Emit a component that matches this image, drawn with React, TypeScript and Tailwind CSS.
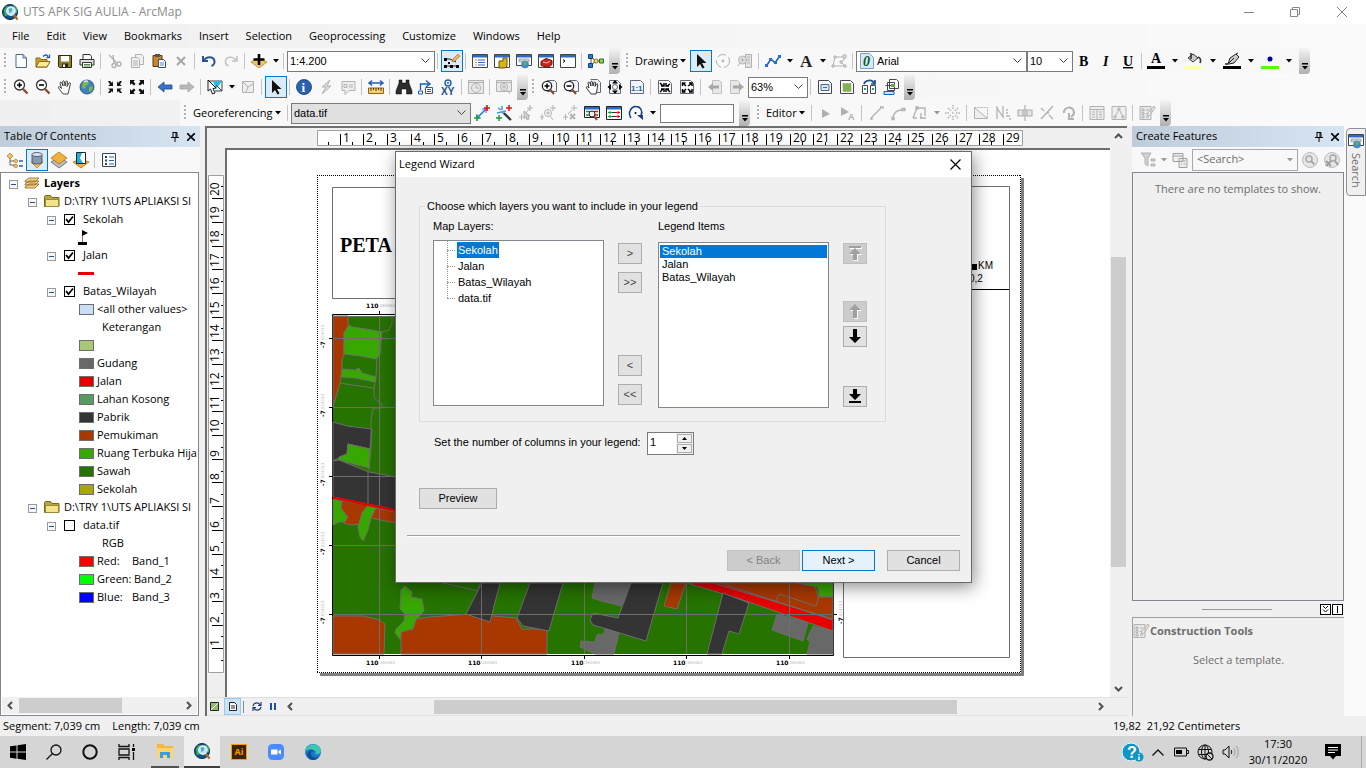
import React, { useState } from 'react';

const G = '#b2b2b2';

// toolbar glyphs, all drawn on a 16x16 grid
const ICONS: Record<string, React.ReactNode> = {
  new: <path d="M3 1.500h7l3.500 3.500v9.500h-10.500z M10 1.500v3.500h3.500" fill="#fff" stroke="#4a6a8a" />,
  open: <><path d="M1 5h4l1 1.500h6v7.500H1z" fill="#c9a227" stroke="#8a6a10" /><path d="M4 8.500h11l-3 5.500H1z" fill="#ffe9a0" stroke="#8a6a10" /><path d="M8 3.500c2-2 4-2 5 0m1.500-2v3h-3" fill="none" stroke="#1c5fa8" strokeWidth="1.300" /></>,
  save: <><path d="M1.500 2.500h13v12h-12l-1-1z" fill="#8c8134" stroke="#2e2a10" /><path d="M4 3h8v5.500H4z" fill="#fff" /><path d="M5 10.500h6v4H5z" fill="#2e2a10" /><path d="M6 11.500h2v2.500H6z" fill="#fff" /></>,
  print: <><path d="M4 7V1.500h7l1.500 2V7" fill="#fff" stroke="#333" /><path d="M1 6.500h14v5.500H1z" fill="#ddd" stroke="#333" /><path d="M3.500 9.500h9v5h-9z" fill="#fff" stroke="#333" /><path d="M5 11.500h6M5 13h6" stroke="#4a8a3a" /></>,
  cut: <g fill="none" stroke={G} strokeWidth="1.400"><path d="M2 2l8 8M6 2l1 8" /><circle cx="12" cy="11" r="2" /><circle cx="7" cy="12.500" r="2" /></g>,
  copy: <g fill="#f0f0f0" stroke={G}><path d="M6.500 1.500h6l2 2v8h-8z" /><path d="M2.500 4.500h6l2 2v8h-8z" /><path d="M4 8h5M4 10h5M4 12h5" /></g>,
  paste: <><path d="M2 2.500h9v11H2z" fill="#c8862a" stroke="#5e3a08" /><path d="M4 1h5v3H4z" fill="#555" /><path d="M7.500 6.500h5l2 2v6h-7z" fill="#fff" stroke="#2b4d80" /><path d="M9 10h4M9 12h4" stroke="#5a8ac8" /></>,
  del: <path d="M4 4l8 8M12 4l-8 8" stroke="#a8a8a8" strokeWidth="2.200" />,
  undo: <path d="M2 3v5h5M2.500 8c3-5 10-5 11 0 .3 2-1 4-3 5" fill="none" stroke="#2a5590" strokeWidth="2" />,
  redo: <path d="M14 3v5H9M13.500 8c-3-5-10-5-11 0-.3 2 1 4 3 5" fill="none" stroke="#c4c4c4" strokeWidth="1.600" />,
  add: <><path d="M0 9l8-4 8 4-8 6z" fill="#f0c66a" stroke="#a87a20" strokeWidth=".7" /><path d="M8 1v11M2.500 6.500h11" stroke="#000" strokeWidth="2.600" /></>,
  editsk: <><path d="M1 6h5l6 3M2 13h10" stroke="#222" fill="none" /><path d="M0 5h3v3H0zM0 12h3v3H0zM6 12h3v3H6zM12 12h3v3h-3zM4 9h2v2H4z" fill="#000" /><path d="M8 9l1-3 5-5 2 2-5 5z" fill="#f0b060" stroke="#a06020" strokeWidth=".6" /></>,
  wlist: <><path d="M.500 1.500h15v13H.500z" fill="#fff" stroke="#444" /><path d="M1 2h14v2.500H1z" fill="#2c6bc4" /><path d="M3 7h2M3 9.500h2M3 12h2" stroke="#d8a020" /><path d="M6 7h7M6 9.500h7M6 12h7" stroke="#2c6bc4" /></>,
  wcat: <><path d="M.500 1.500h15v13H.500z" fill="#fff" stroke="#444" /><path d="M1 2h14v2.500H1z" fill="#2c6bc4" /><path d="M5 8h4V5h4v8l-2 2H5z" fill="#d6b41e" stroke="#6b5608" /></>,
  wglobe: <><path d="M.500 1.500h15v11H.500z" fill="#fff" stroke="#444" /><path d="M1 2h14v2.500H1z" fill="#2c6bc4" /><path d="M3 6h10v3H3z" fill="#ccd" stroke="#889" strokeWidth=".6" /><circle cx="9" cy="11.500" r="3.800" fill="#3d8ad0" /><path d="M7 10l2-2 2 1-1 3-2 1z" fill="#62b347" /></>,
  wbox: <><path d="M.500 1.500h15v13H.500z" fill="#fff" stroke="#444" /><path d="M1 2h14v2.500H1z" fill="#2c6bc4" /><path d="M3 8.500l5-3 6 2v4l-4 3-7-2z" fill="#c8281a" stroke="#701008" /><path d="M5 9l4 1 3-2" stroke="#fff" strokeWidth=".7" fill="none" /></>,
  wpy: <><path d="M.500 1.500h15v13H.500z" fill="#fff" stroke="#444" /><path d="M1 2h14v2.500H1z" fill="#2c6bc4" /><path d="M3 6.500l2 1.500-2 1.500" stroke="#000" fill="none" /></>,
  model: <><path d="M3 4v8M4 4l3 4-3 4M7 8h7" stroke="#555" fill="none" /><path d="M.500 1.500h4v4h-4zM.500 10.500h4v4h-4z" fill="#2c7bd4" stroke="#13406e" /><circle cx="8" cy="8" r="2" fill="#ffe08a" stroke="#8a6a10" /><path d="M11.500 6h4v4h-4z" fill="#8ccf6a" stroke="#2c6a1a" /></>,
  arrow: <path d="M4 1v13l3-3 2.500 4.500 2-1L9 10h4.500z" fill="#111" />,
  rotg: <g stroke={G} fill="none"><circle cx="8" cy="8" r="6.500" strokeDasharray="9 3" /><circle cx="8" cy="8" r="1" fill={G} /></g>,
  zoomg: <g stroke={G} fill="#e2e2e2"><path d="M8.500 1.500h6v13h-6z" /><path d="M10 4h3M10 7h3M10 10h3" /><circle cx="5.500" cy="7" r="4" /><path d="M3.500 7h4M5.500 5v4M3 10l-2 3" /></g>,
  zig: <><path d="M2 12l4-6 4 4 4-6" fill="none" stroke="#1c64b8" strokeWidth="1.600" /><path d="M0 11h3v3H0zM4 5h3v3H4zM9 8h3v3H9zM13 2h3v3h-3z" fill="#2a6fd0" /></>,
  bigA: <text x="2" y="14" fontSize="17" fontWeight="bold" fontFamily="Liberation Serif, serif" fill="#222">A</text>,
  polyg: <g stroke={G} fill="none"><path d="M4 4h9v3l-3 2 4 4H2z" /><path d="M3 3h2v2H3zM12 2h3v3h-3zM1 12h2v2H1zM13 12h2v2h-2zM9 8h2v2H9z" fill="#ddd" /></g>,
  italicO: <><path d="M1.500.500h9l4 4v11h-13z" fill="#d8e8f8" stroke="#7aa4cc" /><text x="4" y="13" fontSize="14" fontStyle="italic" fontWeight="bold" fontFamily="Liberation Serif, serif" fill="#0a5a20">0</text></>,
  bold: <text x="3" y="13" fontSize="14" fontWeight="bold" fontFamily="Liberation Serif, serif">B</text>,
  italic: <text x="5" y="13" fontSize="14" fontStyle="italic" fontWeight="bold" fontFamily="Liberation Serif, serif">I</text>,
  under: <text x="3" y="13" fontSize="14" fontWeight="bold" textDecoration="underline" fontFamily="Liberation Serif, serif">U</text>,
  fontc: <><text x="3" y="10" fontSize="14" fontWeight="bold" fontFamily="Liberation Serif, serif">A</text><path d="M-1 13h18v3H-1z" /></>,
  fillc: <><path d="M2 5l5-4 5 4-5 4z" fill="#ccc" stroke="#333" /><path d="M5 6V0M12 4c3 1 3 4 2 6" stroke="#333" fill="none" strokeWidth="1.600" /><path d="M-1 13h18v3H-1z" fill="#ffffb0" /></>,
  linec: <><path d="M1 11h3l2-6 6-4 3 3-5 6-5 1zM5 10l5-5M12 1l2-1" stroke="#222" fill="#ccc" /><path d="M-1 13h18v3H-1z" /></>,
  markc: <><circle cx="8" cy="6" r="2.500" fill="#00009c" /><path d="M-1 13h18v3H-1z" fill="#5f0" /></>,
  zin: <><circle cx="6.500" cy="6" r="5" fill="#fff" stroke="#333" strokeWidth="1.300" /><path d="M4 6h5M6.500 3.500v5" stroke="#000" strokeWidth="1.600" /><path d="M10 10l4.500 4.500" stroke="#8a4a30" strokeWidth="2.400" /></>,
  zout: <><circle cx="6.500" cy="6" r="5" fill="#fff" stroke="#333" strokeWidth="1.300" /><path d="M4 6h5" stroke="#000" strokeWidth="1.600" /><path d="M10 10l4.500 4.500" stroke="#8a4a30" strokeWidth="2.400" /></>,
  hand: <path d="M6 15L1.500 9c-.5-1 .5-2 1.500-1l1.500 1.500L3 4c0-1 1.300-1.300 1.700-.3L6 7 5.700 2.500c0-1 1.500-1 1.700 0L8 7l1-4.500c.3-1 1.500-.8 1.500.2L10 7.500 12 4c.6-.8 1.700-.2 1.400.7L12 11l-1 4z" fill="#fff" stroke="#333" strokeWidth=".9" />,
  globe: <><circle cx="8" cy="8" r="7" fill="#3f7fc4" stroke="#23466e" strokeWidth=".8" /><path d="M4 3l5-1 1 3-3 2-1 3-3-1zM10 8l4-1-1 5-3 1z" fill="#7ab648" /><path d="M5 3c1-1 3-1 4-.5" stroke="#d8ecff" strokeWidth="1.500" fill="none" /></>,
  fin: <path d="M1 2h2l2 2 1-2v5H1l2-1.500zM15 2h-2l-2 2-1-2v5h5l-2-1.500zM1 14h2l2-2 1 2V9.500H1L3 11zM15 14h-2l-2-2-1 2V9.500h5L13 11z" fill="#111" />,
  fout: <path d="M1 1h5L4.500 2.500 6.500 5 5 6.500 2.500 4.500 1 6zM15 1h-5l1.500 1.500L9.500 5 11 6.500l2.500-2L15 6zM1 15h5l-1.500-1.500 2-2.500L5 9.500l-2.500 2L1 10zM15 15h-5l1.500-1.500-2-2.500L11 9.500l2.500 2L15 10z" fill="#111" />,
  back: <path d="M1 8l6-5v3h8v4H7v3z" fill="#3873c8" stroke="#1f4a90" strokeWidth=".8" />,
  fwd: <path d="M15 8L9 3v3H1v4h8v3z" fill="#b8b8b8" stroke="#a4a4a4" strokeWidth=".8" />,
  selF: <><path d="M1 2h14v10H8" fill="#e8f4fb" stroke="#444" /><path d="M6 2h9l-6 8z" fill="#2ab8e0" /><path d="M9 6l6 6" stroke="#444" /><path d="M1 1v11l2.500-2 2 5 2.500-1-2-4.500 3-.5z" fill="#fff" stroke="#000" strokeWidth=".9" /></>,
  clrg: <path d="M2.500 2.500h11v11h-11zM3 3l5 5-2 5M8 8l5-3" fill="#eee" stroke={G} />,
  info: <><circle cx="8" cy="8" r="7.500" fill="#2a62b0" stroke="#15366a" strokeWidth=".8" /><text x="5.500" y="13" fontSize="13" fontWeight="bold" fontFamily="Liberation Serif, serif" fill="#fff">i</text></>,
  boltg: <path d="M12 1L4 8h4l-4 7 9-8H9z" fill="#ddd" stroke={G} />,
  popg: <g stroke={G} fill="#eee"><path d="M2 2.500h13v9H9l-4 4v-4H2z" /><path d="M4 5.500h3v3H4zM9 6h4M9 8h4" /></g>,
  meas: <><path d="M1 4h14M4 1.500L1 4l3 2.500M12 1.500L15 4l-3 2.500" stroke="#1c5fb0" strokeWidth="1.500" fill="none" /><path d="M.500 9h15v5.500H.500z" fill="#f5cf72" stroke="#8a6414" /><path d="M3 9v3M5.500 9v2M8 9v3M10.500 9v2M13 9v3" stroke="#5a4008" /></>,
  bino: <path d="M3 1h3v3h4V1h3v3l3 8v3h-5.500v-5h-5v5H0v-3l3-8z" fill="#2e2e2e" stroke="#000" strokeWidth=".5" />,
  route: <><path d="M2.500 11V5h8M8 1.500L12 5 8 8" stroke="#1c5fb0" fill="none" strokeWidth="1.400" /><path d="M7.500 8.500h7v6h-7z" fill="#fff" stroke="#1c5fb0" /><path d="M9 10.500h4M9 12.500h4M.500 12h4v3h-4z" stroke="#1c5fb0" fill="none" /></>,
  xy: <><circle cx="8" cy="4" r="3" fill="none" stroke="#1c5fb0" strokeWidth="1.400" /><circle cx="8" cy="4" r="1" fill="#1c5fb0" /><text x="1" y="16" fontSize="10" fontWeight="bold" fontFamily="Liberation Sans, sans-serif" fill="#1c4f90">XY</text></>,
  clockg: <g stroke={G} fill="#e8e8e8"><path d="M.500 1.500h15v13H.500z" /><path d="M1 3.500h14" /><circle cx="8" cy="9" r="4.500" /><path d="M8 6v3h3" /></g>,
  viewg: <g stroke={G} fill="#e8e8e8"><path d="M.500 1.500h15v11H.500z" /><path d="M1 3.500h14" /><circle cx="8" cy="8" r="3.500" /><path d="M6 8h4M8 6v4M11 11l3 4" /></g>,
  pin: <><path d="M6.500 1.500h7l2 2v9h-9z" fill="#eef4fa" stroke="#667" /><circle cx="6" cy="7" r="4.700" fill="#fff" stroke="#222" strokeWidth="1.300" /><path d="M3.500 7h5M6 4.500v5" stroke="#000" strokeWidth="1.500" /><path d="M9.500 11l3.500 4" stroke="#8a4a30" strokeWidth="2" /></>,
  pout: <><path d="M6.500 1.500h7l2 2v9h-9z" fill="#eef4fa" stroke="#667" /><circle cx="6" cy="7" r="4.700" fill="#fff" stroke="#222" strokeWidth="1.300" /><path d="M3.500 7h5" stroke="#000" strokeWidth="1.500" /><path d="M9.500 11l3.500 4" stroke="#8a4a30" strokeWidth="2" /></>,
  phand: <><path d="M5.500.500h7l3 3v10h-4" fill="#eef4fa" stroke="#667" /><path d="M6 15L1.500 9c-.5-1 .5-2 1.500-1l1 1L3 4c0-1 1.300-1.300 1.700-.3L6 7 5.700 3c0-1 1.500-1 1.700 0L8 7l1-3.500c.3-1 1.500-.8 1.500.2L10 7.500 11.500 5c.6-.8 1.500-.2 1.200.7L12 11l-1 4z" fill="#fff" stroke="#222" strokeWidth=".9" /></>,
  pfull: <><path d="M2.500 1.500h8l3 3v10h-11z" fill="#eef4fa" stroke="#667" /><path d="M8 1l3 3.500H5zM8 15l3-3.500H5zM.500 8L4 5v6zM15.500 8L12 5v6z" fill="#000" /><circle cx="8" cy="8" r="2.500" fill="#fff" stroke="#666" /></>,
  p11: <><path d="M1.500 1.500h10l3 3v10h-13z" fill="#eef4fa" stroke="#667" /><text x="2" y="11.500" fontSize="8" fontWeight="bold" fontFamily="Liberation Sans, sans-serif" fill="#1c64a8">1:1</text></>,
  pfin: <><path d="M1.500 1.500h10l3 3v10h-13z" fill="#fff" stroke="#667" /><path d="M3 4l3 3M13 5l-3 2M3 13l3-3M13 13l-3-3M4 7h3V4M9 4v3h3M4 10h3v3M9 13v-3h3" stroke="#000" strokeWidth="1.500" fill="none" /></>,
  pfout: <><path d="M1.500 1.500h10l3 3v10h-13z" fill="#fff" stroke="#667" /><path d="M4 4l3 3M12 5l-3 2M4 13l3-3M12 13l-3-3M3.500 7V4h3M10 4h3v3M3.500 10v3h3M10 13h3v-3" stroke="#000" strokeWidth="1.500" fill="none" /></>,
  pbackg: <><path d="M5.500 1.500h7l2 2v11h-9z" fill="#e8e8e8" stroke="#c0c0c0" /><path d="M1 8l5-4v2.500h6v3H6V12z" fill="#a8a8a8" /></>,
  pfwdg: <><path d="M1.500 1.500h7l2 2v11h-9z" fill="#e8e8e8" stroke="#c0c0c0" /><path d="M15 8l-5-4v2.500H4v3h6V12z" fill="#a8a8a8" /></>,
  dlay: <><path d="M1.500 1.500h10l3 3v10h-13z" fill="#fff" stroke="#445" /><path d="M4 5.500h8v6H4z" fill="#dce8f4" stroke="#456a94" /><path d="M6 8.500h4" stroke="#456a94" /></>,
  dfoc: <><path d="M1.500 1.500h10l3 3v10h-13z" fill="#fff" stroke="#445" /><path d="M4 4.500h8v8H4z" fill="#78b45a" stroke="#c0a040" strokeDasharray="2 1" /></>,
  dchg: <><path d="M1.500 6.500h5v8h-5zM9.500 6.500h5v8h-5z" fill="#fff" stroke="#445" /><path d="M3 10h2M11 10h2" stroke="#2a6" strokeWidth="2" /><path d="M3 5c1-4 8-5 10-1m1-3v4h-4" fill="none" stroke="#1c4f90" strokeWidth="1.700" /></>,
  dpag: <><path d="M6.500.500h7l2 2v7h-9zM4.500 3.500h7v8h-7zM2.500 6.500h7" fill="#fff" stroke="#445" /><path d="M8 5h4v3H8z" fill="#6aa84f" /><path d="M1 12.500h10v3H1z" fill="#cfe0f4" stroke="#1c5fb0" /></>,
  gadd: <><path d="M3 13l9-9" stroke="#1c7fd0" strokeWidth="1.600" /><path d="M8 4h4v4M3 9v4h4" stroke="#1c7fd0" fill="none" /><path d="M0 13h6M3 10v6" stroke="#1aa030" strokeWidth="1.600" /><path d="M10 3h6M13 0v6" stroke="#e01010" strokeWidth="1.600" /></>,
  gauto: <><path d="M2 3l3 2M6 1v4M10 6L1 8M6 7l8 8" stroke="#3a9ad8" strokeWidth="1.500" /><path d="M8 8l7 7" stroke="#333" strokeWidth="2" /><path d="M0 13h6M3 10v6" stroke="#1aa030" strokeWidth="1.500" /><path d="M10 3h6M13 0v6" stroke="#e01010" strokeWidth="1.500" /></>,
  gselg: <g stroke={G} fill="none"><path d="M1 12h5M3.500 9v6M9 3h6M12 0v6M8 8l3-4" /><path d="M6 6v8l2-2 1 3 2-1-1-2 2-1z" fill="#ccc" /></g>,
  gzoomg: <g stroke={G} fill="none"><path d="M0 12h4M2 9v6M10 3h6M13 0v6" /><circle cx="8" cy="8" r="3.500" /><path d="M6 8h4M8 6v4M10 11l3 4" /></g>,
  gdelg: <g stroke={G} fill="none"><path d="M1 12h5M3.500 9v6M9 3h6M12 0v6M6 9l4-4" /><path d="M8 9l5 5M13 9l-5 5" strokeWidth="2" /></g>,
  gview: <><path d="M.500 1.500h15v11H.500z" fill="#fff" stroke="#222" /><path d="M1 2h14v2.500H1z" fill="#2c6bc4" /><path d="M2 6.500h4M2 10h4" stroke="#1aa030" strokeWidth="1.500" /><path d="M10 6.500h4M10 10h4" stroke="#e01010" strokeWidth="1.500" /><circle cx="8" cy="9" r="3" fill="#eee" stroke="#222" /><path d="M10 11l3 4" stroke="#8a4a30" strokeWidth="2" /></>,
  gtab: <><path d="M.500 1.500h15v13H.500z" fill="#fff" stroke="#222" /><path d="M1 2h14v2.500H1z" fill="#2c6bc4" /><path d="M2 7.500h4M2 11.500h4M4 6v3M4 10v3" stroke="#1aa030" /><path d="M10 7.500h4M10 11.500h4M12 6v3M12 10v3" stroke="#e01010" /><path d="M6 7.500h4M6 11.500h4" stroke="#333" /></>,
  grot: <><path d="M3 13C-1 7 4 1 8 1.500c5 0 7 5 5 9" stroke="#1c3f80" strokeWidth="1.500" fill="none" /><path d="M9 10h6v5z" fill="#1c3f80" /><circle cx="7.500" cy="8" r="1" /></>,
  edg: <path d="M4 4l8 5-8 4z" fill="#b0b0b0" />,
  edag: <><path d="M1 2l8 5-8 4z" fill="#b0b0b0" /><text x="8" y="15" fontSize="9" fontWeight="bold" fontFamily="Liberation Sans, sans-serif" fill="#b0b0b0">A</text></>,
  lng: <path d="M3 13L13 3M2 14h2v-2M12 2h3v2" stroke={G} fill="none" strokeWidth="1.400" />,
  arcg: <path d="M3 13c0-5 4-8 9-8M2 12.500h2v2H2zM12 3.500h3v2h-3z" stroke={G} fill="none" strokeWidth="1.400" />,
  trg: <path d="M1 13L5 3h8v8M1 13h4M8 13h6M9 8v6M4 2h2v2H4z" stroke={G} fill="none" strokeWidth="1.300" />,
  ptg: <path d="M8 0v5M8 11v5M0 8h5M11 8h5M3 3l3 3M13 3l-3 3M3 13l3-3M13 13l-3-3M7 8h2" stroke={G} strokeDasharray="1.500 1" strokeWidth="1.500" />,
  e1g: <><path d="M1.500 2.500h13v11h-13z" stroke={G} fill="none" strokeDasharray="2 1" /><path d="M1.500 13.500v-11l13 11z" stroke={G} fill="#eee" /></>,
  e2g: <path d="M2 1v13M2 3l6 9V1M11 5h2M11 8h2M11 11h4M14 14h2" stroke={G} fill="none" strokeWidth="1.300" />,
  e3g: <path d="M1 5h14v6H1zM8 0v16M6 5h4v6H6z" stroke={G} fill="#e4e4e4" strokeWidth="1.200" />,
  e4g: <path d="M14 1L2 14M2 3l3 3M10 10l4 4M7 8h3" stroke={G} strokeWidth="1.400" />,
  e5g: <path d="M3 8c-1-6 9-8 10-1 0 3-1 4-3 5M8 8v6h5" stroke={G} strokeWidth="2" fill="none" />,
  tbg: <path d="M1 1.500h14v13H1zM1 4.500h14M8 4v10M3 7h3M3 9.500h3M3 12h3M10 7h3M10 9.500h3M10 12h3" stroke={G} fill="#eee" />,
  skg: <path d="M1 1.500h14v13H1zM4 12l4-8 4 8M3 11h2v2H3zM7 3h2v2H7zM11 11h2v2h-2z" stroke={G} fill="#eee" />,
  tmg: <path d="M1 1.500h11v13H1zM3 4h2v2H3zM3 7.500h2v2H3zM3 11h2v2H3zM7 5h3M7 8.500h2M7 12h3M15 1l-6 7-1 3 3-1 5-7z" stroke={G} fill="#e8e8e8" />,
  tree: <><path d="M3 6v7h6M3 9h4" stroke="#667" fill="none" /><path d="M0 4l3-3 3 3-3 3zM6 9l3-2 2 2-2 2zM6 14l3-2 2 2-2 2z" fill="#f0c060" stroke="#a87820" strokeWidth=".7" /><path d="M12 9h4M12 14h4" stroke="#1c64b8" strokeWidth="1.500" /></>,
  db: <><path d="M2 10h12l-6 6z" fill="#f0c060" stroke="#a87820" strokeWidth=".7" /><path d="M3 2.500v8c2 2 8 2 10 0v-8z" fill="#8798b0" stroke="#3a4456" strokeWidth=".8" /><ellipse cx="8" cy="2.500" rx="5" ry="2" fill="#dde6f0" stroke="#3a4456" strokeWidth=".8" /></>,
  vis: <><path d="M0 10l8-5 8 5-8 6z" fill="#bbb" stroke="#666" strokeWidth=".8" /><path d="M0 6l8-6 8 6-8 6z" fill="#f0b040" stroke="#a87820" strokeWidth=".8" /></>,
  selL: <><path d="M0 10l8-3 8 3-8 6z" fill="#f0b040" stroke="#a87820" strokeWidth=".8" /><path d="M3.500.500h9v11h-9z" fill="#fff" stroke="#222" /><path d="M4 1h5l-2 5 3 5H4z" fill="#1ab0e0" /></>,
  opts: <><path d="M1.500 1.500h13v13h-13z" fill="#fff" stroke="#345" /><path d="M4 4h2v2H4zM4 7.500h2v2H4zM4 11h2v2H4z" fill="#345" /><path d="M8 5h5M8 8.500h5M8 12h5" stroke="#1c64b8" /></>,
  filg: <path d="M1 1h10L8 6v8l-3-2V6zM11 7h4v2h-4zM11 12h4v2h-4z" fill="#d0d0d0" stroke={G} />,
  orgg: <path d="M1 1.500h10v8H1zM1 4h10M7 6.500h8v9H7zM9 9h1M9 12h1M11.500 9h2M11.500 12h2" fill="#eee" stroke="#a0a0a0" />,
  srchg: <><circle cx="8" cy="8" r="7.500" fill="#e6e6e6" stroke="#bbb" /><circle cx="7" cy="7" r="3" fill="none" stroke="#a8a8a8" strokeWidth="1.500" /><path d="M9 9l3.500 3.500" stroke="#a8a8a8" strokeWidth="2" /></>,
  srcxg: <><circle cx="8" cy="8" r="7.500" fill="#e6e6e6" stroke="#bbb" /><circle cx="9" cy="6" r="3" fill="none" stroke="#a8a8a8" strokeWidth="1.500" /><path d="M11 9l3 4M2 9l5 5M7 9l-5 5" stroke="#999" strokeWidth="1.800" /></>,
};

const Icon = ({ name }: { name: string }) => (
  <svg viewBox="0 0 16 16" className="size-4 shrink-0 overflow-visible" aria-hidden="true">{ICONS[name]}</svg>
);

const Caret = ({ w = 'w-[11px]', grey = false }: { w?: string; grey?: boolean }) => (
  <span className={`flex ${w} shrink-0 justify-center`}>
    <svg viewBox="0 0 6 4" className="h-1 w-1.5"><path d="M0 0h6L3 3.500z" fill={grey ? '#999' : '#000'} /></svg>
  </span>
);

const Grip = () => (
  <span className="flex w-[10px] shrink-0 justify-center">
    <svg viewBox="0 0 2 16" className="h-4 w-0.5"><path d="M1 0v16" stroke="#b0b0b0" strokeWidth="2" strokeDasharray="2 2" /></svg>
  </span>
);

const Sep = () => <span className="mr-[3px] ml-0.5 h-4 w-px shrink-0 bg-[#c4c4c4]" />;

const Overflow = () => (
  <button aria-label="Toolbar options" className="ml-0.5 flex h-[26px] w-[11px] shrink-0 items-end justify-center rounded-r bg-gradient-to-b from-[#f4f4f4] to-[#b0b0b0] pb-1">
    <svg viewBox="0 0 6 7" className="h-[7px] w-1.5"><path d="M0 0h6v1.500H0zM0 3h6L3 6.500z" /></svg>
  </button>
);

// '|' is a separator, 'v' a drop arrow, 'V' a wide one, 'x' a greyed one, '*' marks the pressed tool
const Tools = ({ items }: { items: string }) => (
  <>
    {items.split(' ').map((it, i) => {
      if (it === '|') return <Sep key={i} />;
      if (it === 'v') return <Caret key={i} />;
      if (it === 'V') return <Caret key={i} w="w-4" />;
      if (it === 'x') return <Caret key={i} grey />;
      const on = it.startsWith('*');
      const name = on ? it.slice(1) : it;
      return (
        <button key={i} aria-label={name} className={`flex size-[22px] shrink-0 items-center justify-center ${on ? 'border border-[#0078d7] bg-[#dcebf8]' : ''}`}>
          <Icon name={name} />
        </button>
      );
    })}
  </>
);

const Combo = ({ label, value, w, dim = false, icon }: { label: string; value: string; w: string; dim?: boolean; icon?: string }) => (
  <label className={`relative flex h-[21px] ${w} shrink-0 items-center border border-[#7a7a7a] ${dim ? 'bg-[#e1e1e1]' : 'bg-white'}`}>
    {icon && <span className="pl-0.5"><Icon name={icon} /></span>}
    <select aria-label={label} className="h-full w-full appearance-none bg-transparent px-0.5 font-[Liberation_Sans,sans-serif] text-[11px] outline-none">
      <option>{value}</option>
    </select>
    <svg viewBox="0 0 9 6" className="pointer-events-none absolute right-1 h-1.5 w-[9px]"><path d="M.500.500l4 4 4-4" fill="none" stroke="#444" /></svg>
  </label>
);

const STRIP = 'flex h-[26px] items-center bg-[#f8f8f8]';

const Toolbars = () => (
  <div className="flex shrink-0 flex-col overflow-hidden bg-gradient-to-r from-[#f0f0f0] to-[#fafafa]">
    <div className="flex gap-0.5">
      <div className={STRIP}>
        <Grip />
        <Tools items="new open save print | cut copy paste del | undo redo | add v |" />
        <Combo label="Map scale" value="1:4.200" w="w-[148px]" />
        <Sep />
        <Tools items="*editsk | wlist wcat wglobe wbox wpy | model" />
        <Overflow />
      </div>
      <div className={STRIP}>
        <Grip />
        <button className="flex w-[58px] items-center pl-[3px]">Drawing<Caret /></button>
        <Tools items="*arrow rotg zoomg | zig v bigA v polyg |" />
        <Combo label="Font" value="Arial" w="w-[171px]" icon="italicO" />
        <Combo label="Font size" value="10" w="w-[46px]" />
        <Tools items="bold italic under | fontc V fillc V linec V markc V" />
        <Overflow />
      </div>
    </div>
    <div className="flex">
      <div className={STRIP}>
        <Grip />
        <Tools items="zin zout hand globe | fin fout | back fwd | selF v clrg | *arrow | info boltg popg | meas | bino route xy | clockg | viewg" />
        <Overflow />
      </div>
      <div className={STRIP}>
        <Grip />
        <Tools items="pin pout phand pfull p11 | pfin pfout | pbackg pfwdg" />
        <Combo label="Zoom" value="63%" w="w-[60px]" />
        <Sep />
        <Tools items="dlay dfoc dchg dpag" />
        <Overflow />
      </div>
    </div>
    <div className="flex gap-[3px] pl-[180px]">
      <div className={STRIP}>
        <Grip />
        <button className="flex w-[95px] items-center pl-[3px]">Georeferencing<Caret /></button>
        <Sep />
        <Combo label="Raster layer" value="data.tif" w="w-[180px]" dim />
        <Tools items="gadd gauto gselg gzoomg gdelg gview gtab grot v" />
        <input aria-label="Rotation" className="mr-[3px] ml-0.5 h-[19px] w-[74px] border border-[#7a7a7a] bg-white px-1" />
        <Overflow />
      </div>
      <div className={STRIP}>
        <Grip />
        <button className="flex w-[46px] items-center pl-[3px]">Editor<Caret /></button>
        <Sep />
        <Tools items="edg edag | lng arcg trg x ptg | e1g e2g e3g e4g e5g | tbg skg | tmg" />
        <Overflow />
      </div>
    </div>
  </div>
);

const GlobeLogo = ({ cls }: { cls: string }) => (
  <svg viewBox="0 0 18 18" className={cls}>
    <circle cx="8.500" cy="8.500" r="8" fill="#14557f" stroke="#0a2c48" />
    <path d="M2 6l3-4 3 1-3 4 1 5-3 1zM12 1l4 4v5l-3-2z" fill="#3fae6a" />
    <circle cx="9.500" cy="7.500" r="4.500" fill="#bfe6f5" stroke="#e8f4fa" strokeWidth="1.200" />
    <path d="M7 5l3-1 1 3-3 3z" fill="#55a5c8" />
    <path d="M12.500 11.500l4 5" stroke="#b5651d" strokeWidth="2.400" />
  </svg>
);

const TitleBar = () => (
  <header className="flex h-6 shrink-0 items-center bg-white pl-0.5 text-[#8a8a8a]">
    <GlobeLogo cls="size-[17px]" />
    <h1 className="ml-1 text-[12px]">UTS APK SIG AULIA - ArcMap</h1>
    <div className="ml-auto flex">
      <button aria-label="Minimize" className="flex w-[46px] justify-center"><svg viewBox="0 0 10 10" className="size-2.5"><path d="M0 5.500h10" stroke="#888" /></svg></button>
      <button aria-label="Restore" className="flex w-[46px] justify-center"><svg viewBox="0 0 10 10" className="size-2.5"><path d="M.500 2.500h7v7h-7zM2.500 2.500v-2h7v7h-2" fill="none" stroke="#888" /></svg></button>
      <button aria-label="Close" className="flex w-12 justify-center"><svg viewBox="0 0 10 10" className="size-2.5"><path d="M0 0l10 10M10 0L0 10" stroke="#888" /></svg></button>
    </div>
  </header>
);

const MENU = ['File', 'Edit', 'View', 'Bookmarks', 'Insert', 'Selection', 'Geoprocessing', 'Customize', 'Windows', 'Help'];

const PaneHeader = ({ title }: { title: string }) => (
  <div className="flex h-[21px] shrink-0 items-center bg-gradient-to-r from-[#bfcddb] to-[#d7e4f2] pl-1">
    <h2>{title}</h2>
    <button aria-label="Pin" className="ml-auto"><svg viewBox="0 0 8 10" className="h-2.5 w-2"><path d="M2 .500h4v5M5 .500v5M2 0v5.500M0 5.500h8M4 6v4" fill="none" stroke="#000" /></svg></button>
    <button aria-label="Close" className="mr-[5px] ml-2"><svg viewBox="0 0 8 8" className="size-2"><path d="M0 0l8 8M8 0L0 8" stroke="#000" strokeWidth="1.600" /></svg></button>
  </div>
);

const Expander = () => (
  <button aria-label="Collapse" className="mt-0.5 flex size-[9px] shrink-0 items-center justify-center border border-[#9a9a9a] bg-[#f6f6f6]"><span className="h-px w-[5px] bg-[#2a4f9a]" /></button>
);

const Folder = () => (
  <svg viewBox="0 0 16 14" className="mr-1 h-3.5 w-4 shrink-0"><path d="M.500 12.500v-10l1-1h5l1.500 2h7v9z" fill="#b9a444" stroke="#77681c" /><path d="M1.500 5.500h13v7h-13z" fill="#f2e48c" stroke="#9c8a2c" /></svg>
);

const LayerCheck = ({ label, on }: { label: string; on: boolean }) => {
  const [checked, setChecked] = useState(on);
  return (
    <label className="flex items-center">
      <span className="relative mr-2 ml-2 flex size-[11px]">
        <input type="checkbox" checked={checked} onChange={() => setChecked(!checked)} className="size-[11px] appearance-none border border-black bg-white" />
        {checked && <svg viewBox="0 0 11 11" className="pointer-events-none absolute inset-0 size-[11px]"><path d="M2 5l2.500 3L9 2.500" fill="none" stroke="#000" strokeWidth="1.800" /></svg>}
      </span>
      {label}
    </label>
  );
};

const Row = ({ pad, children }: { pad: string; children: React.ReactNode }) => (
  <li className={`flex h-[18px] items-center whitespace-nowrap ${pad}`}>{children}</li>
);

const Swatch = ({ color }: { color: string }) => <span className={`mr-[3px] h-[11px] w-[15px] shrink-0 border border-[#6e6e6e] ${color}`} />;

const CLASSES = [
  ['bg-[#686868]', 'Gudang'], ['bg-[#e60000]', 'Jalan'], ['bg-[#589b61]', 'Lahan Kosong'], ['bg-[#343434]', 'Pabrik'],
  ['bg-[#a83800]', 'Pemukiman'], ['bg-[#38a800]', 'Ruang Terbuka Hija'], ['bg-[#267300]', 'Sawah'], ['bg-[#a8a800]', 'Sekolah'],
];

const Chev = ({ d }: { d: 'l' | 'r' | 'u' | 'd' }) => {
  const path = { l: 'M6 1L2.500 4.500 6 8', r: 'M3 1l3.500 3.500L3 8', u: 'M1 6l3.500-3.500L8 6', d: 'M1 3l3.500 3.500L8 3' }[d];
  return <svg viewBox="0 0 9 9" className="size-[9px]"><path d={path} fill="none" stroke="#505050" strokeWidth="2" /></svg>;
};

const Contents = () => (
  <aside className="flex w-[200px] shrink-0 flex-col">
    <PaneHeader title="Table Of Contents" />
    <div className="flex h-[25px] items-center bg-[#f8f8f8] pl-1">
      <Tools items="tree *db vis selL | opts" />
    </div>
    <div className="flex min-h-0 w-[199px] flex-1 flex-col border border-[#828790] bg-white p-px">
      <ul className="min-h-0 flex-1 overflow-hidden">
        <Row pad="pl-[7px]">
          <Expander />
          <svg viewBox="0 0 16 14" className="mr-1 ml-1.5 h-3.5 w-4"><path d="M1 11l4-3h10l-4 4H1zM1 8l4-3h10l-4 4H1zM1 5l4-3h10l-4 4H1z" fill="#f3d08a" stroke="#8a6420" strokeWidth=".8" /></svg>
          <b>Layers</b>
        </Row>
        <Row pad="pl-[26px]"><Expander /><span className="w-[7px] shrink-0" /><Folder />D:\TRY 1\UTS APLIAKSI SI</Row>
        <Row pad="pl-[45px]"><Expander /><LayerCheck label="Sekolah" on /></Row>
        <Row pad="pl-[75px]"><svg viewBox="0 0 12 16" className="h-4 w-3"><path d="M5.500 2v11" stroke="#b06060" /><path d="M5 1l6 3-6 3z" /><path d="M1 13h9v3H1z" /></svg></Row>
        <Row pad="pl-[45px]"><Expander /><LayerCheck label="Jalan" on /></Row>
        <Row pad="pl-[76px]"><span className="h-[3px] w-4 bg-[#e60000]" /></Row>
        <Row pad="pl-[45px]"><Expander /><LayerCheck label="Batas_Wilayah" on /></Row>
        <Row pad="pl-[77px]"><Swatch color="bg-[#ccdef5]" />&lt;all other values&gt;</Row>
        <Row pad="pl-[100px]">Keterangan</Row>
        <Row pad="pl-[77px]"><Swatch color="bg-[#a8c878]" /></Row>
        {CLASSES.map(([color, name]) => <Row key={name} pad="pl-[77px]"><Swatch color={color} />{name}</Row>)}
        <Row pad="pl-[26px]"><Expander /><span className="w-[7px] shrink-0" /><Folder />D:\TRY 1\UTS APLIAKSI SI</Row>
        <Row pad="pl-[45px]"><Expander /><LayerCheck label="data.tif" on={false} /></Row>
        <Row pad="pl-[100px]">RGB</Row>
        <Row pad="pl-[77px]"><Swatch color="bg-[#f00]" /><span className="w-[35px]">Red:</span>Band_1</Row>
        <Row pad="pl-[77px]"><Swatch color="bg-[#0f0]" /><span className="w-[37px]">Green:</span>Band_2</Row>
        <Row pad="pl-[77px]"><Swatch color="bg-[#00f]" /><span className="w-[35px]">Blue:</span>Band_3</Row>
      </ul>
      <div className="flex h-[17px] items-center bg-[#f0f0f0]">
        <span className="flex w-[17px] justify-center"><Chev d="l" /></span>
        <span className="h-[15px] w-[103px] bg-[#cdcdcd]" />
        <span className="ml-auto flex w-[17px] justify-center"><Chev d="r" /></span>
      </div>
    </div>
  </aside>
);

const CM = 23.69;
const cms = (n: number) => Array.from({ length: n }, (_, i) => i + 1);

const RulerH = () => (
  <svg viewBox="0 0 706 16" className="h-4 w-[706px] shrink-0 overflow-visible" fontFamily="Open Sans, sans-serif" fontSize="12">
    <path d="M.500.500h705v15H.500z" fill="#fff" stroke="#a0a0a0" />
    {cms(29).map(n => (
      <g key={n}>
        <path d={`M${Math.round(n * CM - 1) + 0.5} 4v11M${Math.round((n - 0.5) * CM - 1) + 0.5} 12v3`} stroke="#000" />
        <text x={Math.round(n * CM) + 2} y="12">{n}</text>
      </g>
    ))}
  </svg>
);

const RulerV = () => (
  <svg viewBox="0 0 16 498" className="h-[498px] w-4 shrink-0 overflow-visible" fontFamily="Open Sans, sans-serif" fontSize="12">
    <path d="M.500.500h15v497H.500z" fill="#fff" stroke="#a0a0a0" />
    {cms(20).map(n => (
      <g key={n}>
        <path d={`M4 ${Math.round(497 - n * CM) + 0.5}h11M13 ${Math.round(497 - (n - 0.5) * CM) + 0.5}h2M13 ${Math.round(497 - 20.5 * CM) + 0.5}h2`} stroke="#000" />
        <text transform={`translate(11 ${Math.round(497 - n * CM) - 2}) rotate(-90)`}>{n}</text>
      </g>
    ))}
  </svg>
);

const BROWN = '#a83800';
const LIME = '#38a800';
const DARK = '#343434';
const GREY = '#686868';

const PARCELS: [string, string][] = [
  [BROWN, '333,316 348,316 348,326 344,333 344,355 342,360 342,369 341,377 340,383 333,407'],
  [LIME, '349,325 352,327 372,330 382,332 381,342 380,355 376,359 360,356 344,354 344,333'],
  [LIME, '342,369 355,370 359,368 362,373 376,377 375,382 355,378 341,377'],
  [DARK, '333,422 347,426 372,429 370,449 348,444 347,454 339,458 333,461'],
  [LIME, '348,444 370,449 369,468 339,460 339,457 347,454'],
  [DARK, '333,461 339,460 369,472 396,477 420,482 420,515 333,497'],
  [LIME, '333,499 342,501 341,508 348,517 346,522 339,522 333,525'],
  [BROWN, '342,501 367,505 368,508 362,513 361,524 350,525 344,523 348,517 341,508'],
  [LIME, '368,505 376,508 371,518 368,530 363,541 360,537 358,527 362,513'],
  [BROWN, '376,508 400,513 400,524 371,518'],
  [BROWN, '333,616 363,616 380,620 385,624 384,654 333,654'],
  [LIME, '401,590 405,586 412,592 411,597 422,599 424,611 417,619 413,630 405,631 400,639 395,633 396,629 404,621 405,614 400,609'],
  [BROWN, '401,654 401,632 413,629 416,619 430,617 470,614 516,618 522,629 540,629 547,630 547,654'],
  [DARK, '482,583 500,583 490,622 466,614 470,606'],
  [DARK, '530,583 563,583 555,610 549,631 523,626 517,618'],
  [GREY, '595,583 631,583 621,606 598,600 592,598'],
  [DARK, '631,583 663,583 646,641 610,630 593,625 590,620 593,613 618,618'],
  [GREY, '605,629 619,633 614,654 595,654 580,647 581,641 595,642 597,635 604,634'],
  [BROWN, '671,583 686,583 677,609 664,606'],
  [BROWN, '710,583 800,583 815,586 818,597 833,597 833,619'],
  [LIME, '797,583 833,583 833,597 819,596 818,587 812,586'],
  ['#e60000', '687,583 720,583 833,620 833,631 740,599'],
  [DARK, '723,593 749,603 739,634 729,631 722,654 707,654'],
  [GREY, '777,614 808,623 803,641 772,630'],
  [GREY, '813,626 833,631 833,654 807,654 810,642 807,639'],
];

const GRID_X = [379, 481, 584, 686, 789];
const GRID_Y = [338, 407, 476, 545, 614];

const MapPage = () => (
  <svg viewBox="317 175 704 498" className="h-[498px] w-[704px] shrink-0 overflow-visible">
    <path d="M320 674.500h704M1022.500 178v498" stroke="#808080" strokeWidth="3" />
    <path d="M317 175h704v498h-704z" fill="#fff" />
    <path d="M317 175.500h704M317 672.500h704M317.500 175v498M1020.500 175v498" stroke="#000" strokeDasharray="1 1" />
    <path d="M332.500 187.500h500v111h-500zM843.500 186.500h166v471h-166z" fill="#fff" stroke="#6e6e6e" />
    <path d="M844 289.500h165" stroke="#000" />
    <text x="340" y="252" fontSize="20" fontWeight="bold" fontFamily="Liberation Serif, serif">PETA</text>
    <path d="M960 264h17v6h-17z" />
    <g fontFamily="Liberation Sans, sans-serif" fontSize="10">
      <text x="978" y="269">KM</text>
      <text x="969" y="282">0,2</text>
    </g>
    <path d="M332.500 314.500h501v341h-501z" fill="#fff" stroke="#000" />
    <path d="M333 316h500v338h-500z" fill="#267300" />
    <g stroke="#6e6e6e" strokeWidth="1">
      {PARCELS.map(([fill, points], i) => <polygon key={i} points={points} fill={fill} />)}
      <g fill="none">
        <path d="M392 316v7l-3 7-7 2M340 383l12 2 22 3M377 357l-1 20-2 11v10l8 6v4h-9l-2 12v28l-2 22M368 472v33M713 583l120 36M776 601l3-7 37 12 3-10M443 583l35 8 2-8M333 316.500h500" />
        {GRID_X.map(x => <path key={x} d={`M${x}.500 316v338`} />)}
        {GRID_Y.map(y => <path key={y} d={`M333 ${y}.500h500`} />)}
      </g>
    </g>
    <path d="M333 497.500l63 13 20 4" stroke="#e60000" strokeWidth="2.500" fill="none" />
    {GRID_X.map(x => <path key={x} d={`M${x}.500 311v4M${x}.500 656v3`} stroke="#000" />)}
    {GRID_Y.map(y => <path key={y} d={`M329 ${y}.500h4M834 ${y}.500h3`} stroke="#000" />)}
    <g fontFamily="DejaVu Sans, sans-serif" fontSize="6">
      {GRID_X.map(x => [308, 665].map(y => (
        <text key={`${x}${y}`} x={x - 13} y={y} fontWeight="bold">110<tspan fontSize="4" fontWeight="normal" fill="#bbb" dy="-1">,360463</tspan></text>
      )))}
      {GRID_Y.map(y => [325, 843].map(x => (
        <text key={`${x}${y}`} transform={`translate(${x} ${y + 10}) rotate(-90)`} fontWeight="bold">-7<tspan fontSize="4" fontWeight="normal" fill="#bbb" dy="-1">,824253</tspan></text>
      )))}
    </g>
  </svg>
);

const MapView = () => (
  <main className="ml-[5px] flex min-w-0 flex-1 flex-col border-t-2 border-l-2 border-[#6e6e6e] bg-[#f0f0f0]">
    <div className="flex min-h-0 flex-1">
      <div className="flex min-w-0 flex-1 flex-col overflow-hidden">
        <div className="h-5 shrink-0 pt-0.5 pl-[110px]"><RulerH /></div>
        <div className="flex min-h-0 flex-1 overflow-hidden">
          <div className="w-[18px] shrink-0 pt-[27px] pl-px"><RulerV /></div>
          <div className="min-w-0 flex-1 overflow-hidden border-t-2 border-l-2 border-[#6e6e6e] bg-white pt-[25px] pl-[90px]"><MapPage /></div>
        </div>
      </div>
      <div className="flex w-[17px] shrink-0 flex-col items-center py-1">
        <Chev d="u" />
        <span className="mt-[116px] h-[310px] w-[15px] bg-[#cdcdcd]" />
        <span className="mt-auto"><Chev d="d" /></span>
      </div>
    </div>
    <div className="flex h-[19px] items-center border-y border-[#e0e0e0] pl-[3px]">
      <button aria-label="Data view"><svg viewBox="0 0 9 9" className="size-[9px]"><path d="M.500.500h8v8h-8z" fill="#8fbf6a" stroke="#222" /><path d="M1 8l7-7" stroke="#fff" /></svg></button>
      <button aria-label="Layout view" className="ml-[5px] flex h-[17px] w-[17px] items-center justify-center border border-[#99c9ef] bg-[#cce4f7]"><svg viewBox="0 0 8 9" className="h-[9px] w-2"><path d="M.500.500h5l2 2v6h-7zM2 4h4M2 6h4" fill="#fff" stroke="#222" /></svg></button>
      <span className="mr-2 ml-0.5 h-3 w-px bg-[#888]" />
      <button aria-label="Refresh"><svg viewBox="0 0 10 9" className="h-[9px] w-2.5"><path d="M1 4c1-4 6-4 7-1M9 0v3.500H6M9 5c-1 4-6 4-7 1M1 9V5.500h3" fill="none" stroke="#1c3f70" strokeWidth="1.200" /></svg></button>
      <button aria-label="Pause" className="ml-2 flex gap-0.5"><span className="h-[7px] w-0.5 bg-[#1c4fa8]" /><span className="h-[7px] w-0.5 bg-[#1c4fa8]" /></button>
      <span className="ml-2.5"><Chev d="l" /></span>
      <span className="ml-[139px] h-3.5 w-[523px] bg-[#cdcdcd]" />
      <span className="mr-[22px] ml-auto"><Chev d="r" /></span>
    </div>
  </main>
);

const Features = () => (
  <aside className="ml-[5px] flex w-[212px] shrink-0 flex-col text-[#6d6d6d]">
    <div className="text-black"><PaneHeader title="Create Features" /></div>
    <div className="flex h-[25px] shrink-0 items-center bg-[#f8f8f8] pl-2">
      <Icon name="filg" />
      <Caret w="w-4" grey />
      <Icon name="orgg" />
      <label className="relative mx-1 flex h-[22px] flex-1 items-center border border-[#a8a8a8]">
        <select aria-label="Search templates" className="w-full appearance-none bg-transparent px-1 outline-none"><option>&lt;Search&gt;</option></select>
        <span className="pointer-events-none absolute right-0.5"><Caret grey /></span>
      </label>
      <button aria-label="Search"><Icon name="srchg" /></button>
      <button aria-label="Clear search" className="mr-1 ml-1.5"><Icon name="srcxg" /></button>
    </div>
    <div className="min-h-0 flex-1 border border-[#828790] pt-2 text-center">There are no templates to show.</div>
    <div className="flex h-4 shrink-0 items-center justify-end">
      <span className="mr-12 h-px w-[70px] bg-[#999]" />
      <button aria-label="Collapse down" className="mr-px flex size-[11px] items-center justify-center border border-black bg-white"><svg viewBox="0 0 7 7" className="size-[7px]"><path d="M1 0l2.500 2.500L6 0M1 3.500L3.500 6 6 3.500" fill="none" stroke="#000" /></svg></button>
      <button aria-label="Split" className="mr-px flex size-[11px] items-center justify-center border border-black bg-white"><span className="h-[7px] w-px bg-black" /></button>
    </div>
    <div className="h-[99px] shrink-0 border-t border-l border-[#a0a0a0] pt-[5px]">
      <h3 className="flex items-center gap-px font-bold"><Icon name="tmg" />Construction Tools</h3>
      <p className="mt-3 text-center">Select a template.</p>
    </div>
  </aside>
);

const BTN = 'flex h-[21px] items-center justify-center border border-[#adadad] bg-[#e1e1e1]';

const ArrowBtn = ({ label, d, off = false }: { label: string; d: string; off?: boolean }) => (
  <button aria-label={label} disabled={off} className={`flex h-[21px] w-6 items-center justify-center border ${off ? 'border-[#bfbfbf] bg-[#ccc]' : 'border-[#adadad] bg-[#e1e1e1]'}`}>
    <svg viewBox="0 0 14 15" className="h-[15px] w-3.5">
      {off && <path d={d} fill="#fff" transform="translate(1 1)" />}
      <path d={d} fill={off ? '#a0a0a0' : '#000'} />
    </svg>
  </button>
);

const LegendWizard = () => {
  const [picked, setPicked] = useState('Sekolah');
  const [columns, setColumns] = useState(1);
  return (
    <section role="dialog" aria-label="Legend Wizard" className="absolute top-[151px] left-[395px] w-[577px] border border-[#6a6a6a] bg-[#f0f0f0] pb-[11px] font-[Liberation_Sans,sans-serif] text-[11px] shadow-[2px_4px_16px_rgba(0,0,0,0.45)]">
      <div className="flex h-[25px] items-center bg-white pl-[3px]">
        <h2 className="font-[Open_Sans,sans-serif] text-[11px]">Legend Wizard</h2>
        <button aria-label="Close" className="mr-2.5 ml-auto"><svg viewBox="0 0 11 11" className="size-[11px]"><path d="M.500.500l10 10M10.500.500l-10 10" stroke="#000" strokeWidth="1.200" /></svg></button>
      </div>
      <fieldset className="mt-[21px] ml-[23px] h-[224px] w-[467px] border border-[#dcdcdc] px-[13px]">
        <legend className="-ml-2 px-0.5 leading-4">Choose which layers you want to include in your legend</legend>
        <div className="flex">
          <div className="w-[171px]">
            <h3 className="mt-1 h-[22px] leading-4">Map Layers:</h3>
            <ul role="tree" className="relative h-[166px] border border-[#828790] bg-white pt-px pl-[13px]">
              <span className="absolute top-0 left-[13px] h-[57px] border-l border-dotted border-[#999]" />
              {['Sekolah', 'Jalan', 'Batas_Wilayah', 'data.tif'].map((n, i) => (
                <li key={n} role="treeitem" className="flex h-4 items-center">
                  <span className="mr-0.5 w-2 border-t border-dotted border-[#999]" />
                  <span className={`px-px leading-4 ${i === 0 ? 'bg-[#0078d7] text-white' : ''}`}>{n}</span>
                </li>
              ))}
            </ul>
          </div>
          <div className="ml-3.5 flex flex-col pt-[29px] text-[#444]">
            <button className={`${BTN} w-6`}>&gt;</button>
            <button className={`${BTN} mt-2 w-6`}>&gt;&gt;</button>
            <button className={`${BTN} mt-[62px] w-6`}>&lt;</button>
            <button className={`${BTN} mt-2 w-6`}>&lt;&lt;</button>
          </div>
          <div className="ml-4 w-[171px]">
            <h3 className="mt-1 h-6 leading-4">Legend Items</h3>
            <ul role="listbox" aria-label="Legend Items" className="h-[166px] border border-[#828790] bg-white p-px pt-0.5">
              {['Sekolah', 'Jalan', 'Batas_Wilayah'].map(n => (
                <li key={n} role="option" aria-selected={n === picked} onClick={() => setPicked(n)} className={`h-[13px] pl-0.5 leading-[13px] ${n === picked ? 'bg-[#0078d7] text-white' : ''}`}>{n}</li>
              ))}
            </ul>
          </div>
          <div className="ml-3.5 flex flex-col pt-[29px]">
            <ArrowBtn label="Move to top" off d="M1 0h12v2H1zM7 2l6 6H9v6H5V8H1z" />
            <span className="h-[37px]" />
            <ArrowBtn label="Move up" off d="M7 0l6 6H9v8H5V6H1z" />
            <span className="h-1" />
            <ArrowBtn label="Move down" d="M5 0h4v8h4l-6 6-6-6h4z" />
            <span className="h-[39px]" />
            <ArrowBtn label="Move to bottom" d="M5 0h4v5h4l-6 6-6-6h4zM1 12h12v2H1z" />
          </div>
        </div>
      </fieldset>
      <div className="mt-2.5 ml-[38px] flex h-[23px] items-center">
        <label htmlFor="columns" className="w-[213px] pb-0.5">Set the number of columns in your legend:</label>
        <div className="flex h-[23px] w-[47px] border border-[#7a7a7a] bg-white">
          <input id="columns" value={columns} onChange={e => setColumns(Number(e.target.value) || 1)} className="min-w-0 flex-1 bg-white px-0.5 pb-0.5 outline-none" />
          <div className="flex w-[17px] flex-col gap-px bg-[#f0f0f0] p-px">
            <button aria-label="More columns" onClick={() => setColumns(columns + 1)} className="flex flex-1 items-center justify-center border border-[#adadad]"><svg viewBox="0 0 5 3" className="h-[3px] w-[5px]"><path d="M0 3h5L2.500 0z" /></svg></button>
            <button aria-label="Fewer columns" onClick={() => setColumns(Math.max(1, columns - 1))} className="flex flex-1 items-center justify-center border border-[#adadad]"><svg viewBox="0 0 5 3" className="h-[3px] w-[5px]"><path d="M0 0h5L2.500 3z" /></svg></button>
          </div>
        </div>
      </div>
      <button className={`${BTN} mt-[33px] ml-[23px] w-[78px]`}>Preview</button>
      <hr className="mx-[11px] mt-[26px] border-t border-b border-t-[#a0a0a0] border-b-white" />
      <div className="mt-[13px] mr-[11px] flex justify-end">
        <button disabled className="mr-0.5 flex h-[21px] w-[73px] items-center justify-center border border-[#bfbfbf] bg-[#ccc] text-[#838383]">&lt; Back</button>
        <button className="mr-3 flex h-[21px] w-[73px] items-center justify-center border border-[#0078d7] bg-[#e5f1fb]">Next &gt;</button>
        <button className={`${BTN} w-[73px]`}>Cancel</button>
      </div>
    </section>
  );
};

const TaskBtn = ({ label, state = '', children }: { label: string; state?: string; children: React.ReactNode }) => (
  <button aria-label={label} className={`flex h-8 w-9 items-center justify-center ${state}`}>{children}</button>
);

const Taskbar = () => (
  <footer className="flex h-8 shrink-0 items-center bg-[#d5d5d5]">
    <TaskBtn label="Start"><svg viewBox="0 0 16 16" className="size-4"><path d="M0 2.300L6.500 1.400v6H0zM7.500 1.300L16 0v7.500H7.500zM0 8.500h6.500v6.200L0 13.700zM7.500 8.500H16V16l-8.500-1.200z" /></svg></TaskBtn>
    <TaskBtn label="Search"><svg viewBox="0 0 16 16" className="size-4"><circle cx="10" cy="6" r="5" fill="none" stroke="#111" strokeWidth="1.300" /><path d="M6.500 9.500L.500 15.500" stroke="#111" strokeWidth="1.300" /></svg></TaskBtn>
    <TaskBtn label="Cortana"><svg viewBox="0 0 16 16" className="size-4"><circle cx="8" cy="8" r="6.700" fill="none" stroke="#111" strokeWidth="2" /></svg></TaskBtn>
    <TaskBtn label="Task view"><svg viewBox="0 0 17 16" className="h-4 w-[17px]"><path d="M1 0v2.500h10V0M1 16v-2.500h10V16M1 5h10v6H1zM15.500 0v3M15.500 8v8" fill="none" stroke="#111" strokeWidth="1.300" /><path d="M14 4h3v3h-3z" /></svg></TaskBtn>
    <div className="flex h-8 w-10 justify-center pl-0.5">
      <button aria-label="File Explorer" className="flex h-8 w-7 items-center justify-center border-b-2 border-[#505050]"><svg viewBox="0 0 16 16" className="size-4"><path d="M0 1h6l1.500 2H16v12H0z" fill="#f5b83a" /><path d="M0 5h16v10H0z" fill="#ffd667" /><path d="M3 9h10v6h-3v-3H6v3H3z" fill="#3a9be0" /></svg></button>
    </div>
    <TaskBtn label="ArcMap" state="mr-px border-b-2 border-[#404040] bg-[#efefef]"><GlobeLogo cls="size-[17px]" /></TaskBtn>
    <TaskBtn label="Illustrator"><span className="flex h-4 w-4 items-center justify-center border border-[#ff9a00] bg-[#3a2408] text-[9px] font-bold text-[#ff9a00]">Ai</span></TaskBtn>
    <TaskBtn label="Zoom" state="mx-px"><svg viewBox="0 0 16 16" className="size-4"><rect width="16" height="16" rx="4.500" fill="#4a8cff" /><path d="M3 5.500h6.500v5H3zM10.500 7l2.500-1.500v5L10.500 9z" fill="#fff" /></svg></TaskBtn>
    <TaskBtn label="Edge"><svg viewBox="0 0 16 16" className="size-4"><circle cx="8" cy="8" r="8" fill="#1b78c8" /><path d="M0 8C1-1 14-2 16 6c0 4-4 5-6 4 1-1 1-3-1-4-4-2-8 0-9 2z" fill="#3cc8b0" /><path d="M6 8c-1 4 3 7 8 5-3 4-9 4-11 0-2-3 0-6 3-7 2 0 3 1 3 2-1-1-3-1-3 0z" fill="#0c4f9c" /></svg></TaskBtn>
    <div className="ml-auto flex items-center">
      <svg viewBox="0 0 22 20" className="h-5 w-[22px]"><circle cx="9" cy="10" r="9" fill="#0f96c8" stroke="#e8f6fc" /><text x="5" y="16" fontSize="16" fontWeight="bold" fill="#fff" fontFamily="Liberation Sans, sans-serif">?</text><circle cx="17" cy="15" r="4.500" fill="#0f96c8" /><path d="M17 12v1.200M17 14.500v3.500" stroke="#fff" strokeWidth="1.500" /></svg>
      <svg viewBox="0 0 12 7" className="ml-2 h-[7px] w-3"><path d="M.500 6.500L6 1l5.500 5.500" fill="none" stroke="#111" strokeWidth="1.300" /></svg>
      <svg viewBox="0 0 15 10" className="ml-2.5 h-2.5 w-[15px]"><path d="M.500 1h12v8H.500zM13 3.500h1.500v3H13" fill="none" stroke="#111" /><path d="M2 3h6v4H2z" /></svg>
      <svg viewBox="0 0 17 17" className="ml-2 size-[17px]"><g fill="none" stroke="#111"><circle cx="8" cy="8" r="7" /><ellipse cx="8" cy="8" rx="3.500" ry="7" /><path d="M1.500 5.500h13M1.500 10.500h9M8 1v14" /></g><circle cx="12.500" cy="12.500" r="3.500" fill="#d5d5d5" stroke="#111" strokeWidth="1.300" /><path d="M10 10l5 5" stroke="#111" /></svg>
      <svg viewBox="0 0 17 14" className="ml-2 h-3.5 w-[17px]"><path d="M1 5h2l4-4v12L3 9H1z" fill="none" stroke="#111" /><path d="M9 5c1 1 1 3 0 4" fill="none" stroke="#111" /><path d="M11.500 3c2 2 2 6 0 8M14 1c3 3 3 9 0 12" fill="none" stroke="#999" /></svg>
      <div className="ml-2 flex w-[62px] flex-col items-center leading-4"><time>17:30</time><time>30/11/2020</time></div>
      <svg viewBox="0 0 16 16" className="ml-4 h-4 w-4"><path d="M0 0h16v12h-5l-3 3.500L5 12H0z" /><path d="M3 3.500h10M3 6h10M3 8.500h7" stroke="#fff" /></svg>
      <span className="mr-1 ml-5 h-8 w-px bg-[#aaa]" />
    </div>
  </footer>
);

export default function App() {
  return (
    <div className="relative flex h-screen flex-col overflow-hidden bg-[#f0f0f0] font-[Open_Sans,sans-serif] text-[11px] text-black">
      <TitleBar />
      <nav className="flex h-6 shrink-0 items-center gap-px bg-gradient-to-r from-[#f0f0f0] to-[#fafafa] pl-1">
        {MENU.map(m => <button key={m} className="px-2">{m}</button>)}
      </nav>
      <Toolbars />
      <div className="flex min-h-0 flex-1">
        <Contents />
        <MapView />
        <Features />
        <div className="w-[22px] shrink-0 bg-[#fafafa] pt-0.5 pl-0.5 text-[#6d6d6d]">
          <button className="flex h-[68px] w-5 flex-col items-center rounded-l border border-[#909090] bg-[#f0f0f0] pt-1">
            <Icon name="wglobe" />
            <span className="mt-1 [writing-mode:vertical-rl]">Search</span>
          </button>
        </div>
      </div>
      <div className="flex h-5 shrink-0 items-center bg-[#f0f0f0] pl-[3px]">
        <span>Segment: 7,039 cm</span>
        <span className="ml-3">Length: 7,039 cm</span>
        <span className="ml-auto w-[253px]">19,82&nbsp; 21,92 Centimeters</span>
      </div>
      <Taskbar />
      <LegendWizard />
    </div>
  );
}
